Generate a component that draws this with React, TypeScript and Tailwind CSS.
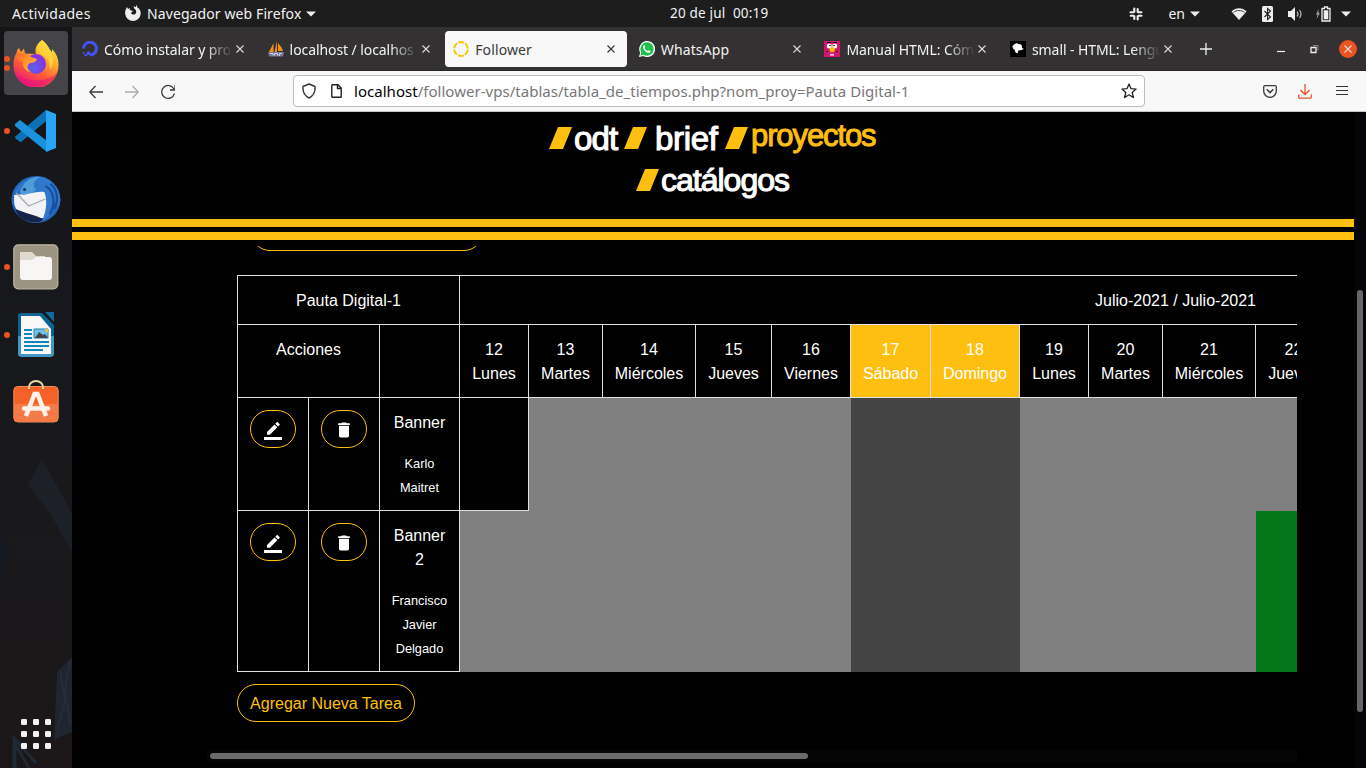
import React from "react";

const ui = "font-['Noto_Sans',sans-serif]";

function Caret() {
  return (
    <svg width="10" height="6" viewBox="0 0 10 6" className="shrink-0">
      <path d="M0 .5h10L5 5.5z" fill="#eee" />
    </svg>
  );
}

function TopBar() {
  return (
    <header className={`flex h-[27px] shrink-0 items-center bg-[#1d1d1d] text-[14px] text-[#f2f2f2] ${ui}`}>
      <span className="ml-3 w-[113px] whitespace-nowrap tracking-[0.36px]">Actividades</span>
      <svg width="16" height="17" viewBox="0 0 16 17" className="shrink-0">
        <path d="M1 4l1-2 1 2 2-1-.3 2L8 6l-2 2c1 2 4 2 5 0 .8-2-.5-3.6-1.8-4.4L8.5 1l2.2 1.2L11.5 0l1 2.4C15 4 16 6.500 15.700 9A7.800 7.800 0 0 1 .2 9C0 7 .3 5.300 1 4z" fill="#eee" />
      </svg>
      <span className="ml-[6px] w-[156px] whitespace-nowrap tracking-[0.1px]">Navegador web Firefox</span>
      <span className="ml-[3px]"><Caret /></span>
      <span className="ml-[354px] w-[100px] whitespace-pre text-[13.5px] tracking-[0.2px]">20 de jul  00:19</span>
      <div className="ml-auto flex items-center">
        <svg width="14" height="14" viewBox="0 0 14 14" className="mr-[25px]" stroke="#eee" strokeWidth="2.100" strokeLinecap="round">
          <path d="M5.300 1.600v3.200M1.500 5.200h3M8.700 2v3M9.500 5.300h2.900M1.700 8.700h2.900M5.300 9.200v2.800M8.700 9.300v3.100M9.500 8.800h3" />
        </svg>
        <span className="mr-[5px]">en</span>
        <Caret />
        <svg width="16" height="12" viewBox="0 0 16 12" className="ml-[31px]">
          <path d="M.5 3.500C5-.8 11-.8 15.500 3.500L8 12z" fill="#eee" />
          <path d="M2.300 4.500C5.500 1.800 10.500 1.800 13.700 4.500" fill="none" stroke="#1d1d1d" strokeWidth=".8" />
        </svg>
        <svg width="12" height="16" viewBox="0 0 12 16" className="ml-[15px]">
          <rect width="11" height="16" rx="1.500" fill="#eee" />
          <path d="M2.500 5l6 6L5.600 13.500v-11L8.500 5l-6 6" fill="none" stroke="#1d1d1d" strokeWidth="1.100" />
        </svg>
        <svg width="16" height="14" viewBox="0 0 16 14" className="ml-[14px]">
          <path d="M0 4h3l4-4v14l-4-4H0z" fill="#eee" />
          <path d="M9 4.500q2 2.500 0 5M11.500 3q3 4 0 8" fill="none" stroke="#bbb" strokeWidth="1.200" />
        </svg>
        <svg width="16" height="16" viewBox="0 0 16 16" className="ml-[11px]">
          <path d="M3.500 3L1 8.500h1.500L1.500 13 5 7H3.500z" fill="#999" />
          <path d="M7 2.500h2.500V1h3v1.500H15V15H7z" fill="none" stroke="#eee" strokeWidth="1.300" />
          <path d="M8.700 4.300h4.600v9H8.700z" fill="#eee" />
        </svg>
        <span className="mr-[15px] ml-[10px]"><Caret /></span>
      </div>
    </header>
  );
}

function FirefoxIcon() {
  return (
    <svg width="48" height="48" viewBox="0 0 48 48">
      <defs>
        <linearGradient id="fxBody" x1=".85" y1="0" x2=".3" y2="1">
          <stop offset="0" stopColor="#fff04a" />
          <stop offset=".35" stopColor="#ffb02c" />
          <stop offset=".65" stopColor="#ff5b36" />
          <stop offset="1" stopColor="#e8127c" />
        </linearGradient>
        <radialGradient id="fxGlobe" cx=".4" cy=".7" r=".7">
          <stop offset="0" stopColor="#5a62e8" />
          <stop offset="1" stopColor="#8b2be0" />
        </radialGradient>
        <linearGradient id="fxHead" x1="0" y1="0" x2="1" y2="1">
          <stop offset="0" stopColor="#ff6a2c" />
          <stop offset="1" stopColor="#ffc52e" />
        </linearGradient>
      </defs>
      <path d="M30 1c4 3 6 6 8 10l2 2V10c5 5 7 11 6.500 17A22.500 22.500 0 0 1 1.500 26c0-6 1-9 3-12 0-2 1-4 2.500-5l2 4 3-3.500 1 5L24 15c-2-6 2-11 6-14z" fill="url(#fxBody)" />
      <path d="M3 32c7 11 31 13 42 2-6 17-35 19-42-2z" fill="#e5137d" opacity=".55" />
      <circle cx="24" cy="25" r="10" fill="url(#fxGlobe)" />
      <path d="M4 17c3-3 9-3 12-1 3 2 6 3 9 4-1 3-4 4-7 4-3 2-4 6 1 9-7-1-9-7-8-10l-5-2z" fill="url(#fxHead)" />
      <path d="M30 1c4 3 6 6 8 10 4 6 4 15 0 20 0-9-3-13-9-16-5-4-2-11 1-14z" fill="#ffd83a" opacity=".8" />
    </svg>
  );
}

function CodeIcon() {
  return (
    <svg width="44" height="44" viewBox="0 0 44 44">
      <path d="M1 28L32 1v11L7 33l-5-3z" fill="#1476b6" />
      <path d="M32 1L1 28l5 5L32 12z" fill="#0d72b4" />
      <path d="M1 15l5-4 27 21v11L1 17z" fill="#1a92dc" />
      <path d="M32 1l10 4v34l-10 4z" fill="#2aa5f5" />
    </svg>
  );
}

function MailIcon() {
  return (
    <svg width="50" height="48" viewBox="0 0 48 48" preserveAspectRatio="none">
      <circle cx="24" cy="24.500" r="23.500" fill="#2467bd" />
      <path d="M3 23C4 9 17 1 31 2 44 7 50 21 46 32l-6-9c2 10-2 18-11 24 5-8 5-15 0-20L10 12z" fill="#2f78ca" />
      <path d="M11 12c3-7 10-11 18-10-7 2-9 8-5 13-4 3-9 6-13 5-3-2-3-5 0-8z" fill="#4d9ed8" />
      <path d="M3 20c4 0 7-1 9 0 6-1 12-4 20-3 3 7 2 18-1 26-8 2-15-2-20-3-5-4-8-8-8-13z" fill="#f3f3f5" />
      <path d="M5 18l12 13 16-7" fill="none" stroke="#a9aaae" strokeWidth="1.300" />
      <path d="M4 34q10 4 20 7l7 3q-3 4-9 3C14 47 6 42 4 34z" fill="#17224b" />
      <path d="M33 11c9 5 10 18 4 28M38 9c7 6 8 18 3 25" fill="none" stroke="#174d9a" strokeWidth="2" />
      <circle cx="13" cy="14.500" r="1.500" fill="#173260" />
    </svg>
  );
}

function FilesIcon() {
  return (
    <svg width="46" height="46" viewBox="0 0 46 46">
      <rect x=".8" y=".8" width="44" height="44" rx="4.500" fill="#9c9482" stroke="#bdb5a4" strokeWidth="1.200" />
      <path d="M7 9q0-1 1-1h11l4 4h9v8H7z" fill="#dedacd" />
      <path d="M7 16h12l4-3h13q3 0 3 3v17q0 3-3 3H10q-3 0-3-3z" fill="#f7f6f4" />
    </svg>
  );
}

function WriterIcon() {
  return (
    <svg width="38" height="46" viewBox="0 0 38 46">
      <path d="M4 1h21l12 12v28q0 4-4 4H5q-4 0-4-4V4q0-3 3-3z" fill="#0c6294" />
      <path d="M1 24h36v17q0 4-4 4H5q-4 0-4-4z" fill="#4395c5" />
      <path d="M28 0h9v10z" fill="#12699a" />
      <path d="M4 4h19l11 13v25H4z" fill="#f8f8f8" />
      <path d="M7 18h8M7 22h8M7 26h8M7 30h25M7 34h25M7 38h19" stroke="#1684bc" strokeWidth="2" />
      <path d="M17 17h14v9H17z" fill="#73bfe7" stroke="#1684bc" strokeWidth="1" />
      <path d="M18 26l4-6 4 3 2-1 3 4z" fill="#444" />
      <path d="M27 17h4v4z" fill="#f0c12a" />
    </svg>
  );
}

function SoftwareIcon() {
  return (
    <svg width="46" height="43" viewBox="0 0 46 43" className="mb-[3px]">
      <rect x=".8" y="6.500" width="44.400" height="35.500" rx="4" fill="#f4622a" stroke="#f58b5e" />
      <path d="M1 24h44v14q0 4-4 4H5q-4 0-4-4z" fill="#f47a48" />
      <path d="M16 9V7a7 6 0 0 1 14 0v2" fill="none" stroke="#ecd7a5" strokeWidth="2" />
      <path d="M13 36l8.500-22h3L33 36" fill="none" stroke="#fff2e8" strokeWidth="4.500" />
      <path d="M11 28.500h24" stroke="#fff2e8" strokeWidth="4.500" strokeLinecap="round" />
    </svg>
  );
}

function DockItem({ dots = 0, active = false, children }: { dots?: number; active?: boolean; children: React.ReactNode }) {
  return (
    <div className={`grid h-16 w-16 shrink-0 grid-cols-[5px_1fr] items-center rounded-[4px] ${active ? "bg-[#454549]" : ""}`}>
      <div className="flex flex-col gap-[3px]">
        {Array.from({ length: dots }, (_, i) => (
          <i key={i} className="h-[6px] w-[6px] rounded-full bg-[#e95420]" />
        ))}
      </div>
      <div className="flex justify-center pr-[6px] pb-px">{children}</div>
    </div>
  );
}

function Dock() {
  return (
    <aside className="flex w-[72px] shrink-0 flex-col items-center bg-linear-to-b from-[#151517] via-[#18191d] to-[#1b1718] pt-1">
      <div className="flex flex-col gap-[4px]">
        <DockItem dots={2} active><FirefoxIcon /></DockItem>
        <DockItem dots={1}><CodeIcon /></DockItem>
        <DockItem><MailIcon /></DockItem>
        <DockItem dots={1}><FilesIcon /></DockItem>
        <DockItem dots={1}><WriterIcon /></DockItem>
        <DockItem><SoftwareIcon /></DockItem>
      </div>
      <svg width="72" height="333" viewBox="0 0 72 333" className="shrink-0">
        <path d="M28 50l14-26 30 54v40L50 78z" fill="#1d2026" />
        <path d="M55 285l2-48 15-15v75L54 305z" fill="#20262f" />
        <path d="M60 235l5 30-8 30M70 225l-5 30 5 34" stroke="#252d39" strokeWidth="2" fill="none" />
        <path d="M14 333v-30l22 25M15 333v-24l14 24" stroke="#1d2a36" strokeWidth="3" fill="none" />
        <path d="M0 94l10 23-10 34z" fill="#15191f" />
        {[0, 1, 2].map((r) => [0, 1, 2].map((c) => (
          <rect key={`${r}-${c}`} x={21 + c * 12} y={284 + r * 12} width="6" height="6" rx="1.300" fill="#f0f0f0" />
        )))}
      </svg>
    </aside>
  );
}

function Close({ dark = false }: { dark?: boolean }) {
  return (
    <svg width="8" height="8" viewBox="0 0 8 8">
      <path d="M.5.5l7 7m0-7l-7 7" stroke={dark ? "#333" : "#ddd"} strokeWidth="1.100" />
    </svg>
  );
}

const favicons = [
  <svg key="0" width="16" height="16" viewBox="0 0 16 16">
    <path d="M1.600 7.500a6.400 6.400 0 1 1 6.400 6.500" fill="none" stroke="#4552f5" strokeWidth="3" />
    <path d="M5 10.500h3V14H5zM2.500 13H5v2.200H2.500zM1 11h1.600v1.800H1z" fill="#4552f5" />
  </svg>,
  <svg key="1" width="16" height="16" viewBox="0 0 16 16">
    <path d="M5.500 2v9H1zM9 0v11H6.500zM10 2q4 4 5 8h-5z" fill="#f29112" />
    <path d="M0 11h16l-1 4.500H1z" fill="#77789d" />
    <path d="M2 12.500h3v2M6.500 14.500v-2h3v2M11.500 15v-2.500H14" stroke="#d3d3e5" fill="none" />
  </svg>,
  <svg key="2" width="16" height="16" viewBox="0 0 16 16">
    <circle cx="8" cy="8" r="6.900" fill="none" stroke="#fdc30e" strokeWidth="2" strokeDasharray="5.900 1.320" strokeDashoffset="-.7" />
  </svg>,
  <svg key="3" width="16" height="16" viewBox="0 0 16 16">
    <path d="M0 16l1.100-4.300A8 8 0 1 1 4.300 15z" fill="#fff" />
    <circle cx="8" cy="8" r="6.700" fill="#20bf4c" />
    <path d="M1.500 14.500l1-3.500L5 14z" fill="#20bf4c" />
    <path d="M5.300 4l1 2-.7 1.200q1.100 2 3 2.800l1.100-.8 2 .9c-.3 1.800-1.500 2-3 1.600Q5 10.500 4 6.500 3.900 4.300 5.300 4z" fill="#fff" />
  </svg>,
  <svg key="4" width="16" height="16" viewBox="0 0 16 16">
    <path d="M0 0h16v16H0z" fill="#d4146f" />
    <path d="M3 1.500h4M9 1.500h4M2 10.500h2M12 10.500h2" stroke="#180b14" />
    <circle cx="5.300" cy="5" r="2.500" fill="#fff" />
    <circle cx="10.700" cy="5" r="2.500" fill="#fff" />
    <circle cx="6" cy="4.500" r=".8" />
    <circle cx="10" cy="4.500" r=".8" />
    <circle cx="8.200" cy="8.500" r="2.600" fill="#ffc400" />
    <path d="M6 12.800h4v2H6z" fill="#eac4db" />
  </svg>,
  <svg key="5" width="16" height="16" viewBox="0 0 16 16">
    <path d="M0 0h16v16H0z" fill="#000" />
    <path d="M2.500 5q3-4 6-2 4 0 3.500 4l2 1-2.500 1-3 .5-1 3Q4 11 5 9 2 8 2.500 5z" fill="#fff" />
  </svg>,
];

const tabs = [
  "Cómo instalar y pro",
  "localhost / localhos",
  "Follower",
  "WhatsApp",
  "Manual HTML: Cóm",
  "small - HTML: Lengu",
];

function TabStrip() {
  return (
    <div className={`flex h-[44px] items-center border-b border-[#242324] bg-[#333132] pt-px pl-[2px] text-[14px] ${ui}`}>
      <div className="flex gap-[3.600px]">
        {tabs.map((t, i) => {
          const on = i === 2;
          const fade = i !== 2 && i !== 3;
          return (
            <div key={t} className={`flex h-9 w-[182px] items-center rounded-[4px] pl-2 ${on ? "bg-[#f8f8f8] text-[#3a3a3a]" : "text-[#f3f3f3]"}`}>
              {favicons[i]}
              <span className={`ml-[6px] w-[129px] overflow-hidden whitespace-nowrap ${fade ? "mask-r-from-78% mask-r-to-100% tracking-[-0.080px]" : "tracking-[0.12px]"}`}>{t}</span>
              <span className="ml-[3px]"><Close dark={on} /></span>
            </div>
          );
        })}
      </div>
      <svg width="12" height="12" viewBox="0 0 12 12" className="ml-[16.500px]"><path d="M6 0v12M0 6h12" stroke="#eee" strokeWidth="1.300" /></svg>
      <svg width="8" height="8" viewBox="0 0 8 8" className="ml-auto"><path d="M0 6.500h8" stroke="#eee" strokeWidth="1.200" /></svg>
      <svg width="9" height="9" viewBox="0 0 9 9" className="ml-[25px]" fill="none">
        <path d="M1 2.500h5v5H1z" stroke="#eee" strokeWidth="1.300" />
        <path d="M3 .5h5v5" stroke="#888" />
      </svg>
      <span className="mr-[9px] ml-[20px] flex h-[18px] w-[18px] items-center justify-center rounded-full bg-[#e95420]"><Close /></span>
    </div>
  );
}

function Toolbar() {
  return (
    <div className={`flex h-[41px] items-center border-b border-[#c6c6c6] bg-[#f8f8f8] ${ui}`}>
      <svg width="86" height="16" viewBox="0 0 86 16" className="mt-px ml-[17px]" fill="none" strokeWidth="1.300" stroke="#3b3b3b">
        <path d="M14 8H1m5.500-6L.8 8l5.700 6" />
        <path d="M36 8h13m-5.500-6l5.700 6-5.700 6" stroke="#aaa" />
        <path d="M85 5A6.500 6.500 0 1 0 85.500 9.500M86 1v5h-5" />
      </svg>
      <div className="ml-[118px] flex h-8 w-[852px] items-center rounded-[4px] border border-[#bdbdbd] bg-white">
        <svg width="14" height="16" viewBox="0 0 14 16" className="ml-2" fill="none" stroke="#333" strokeWidth="1.400">
          <path d="M7 1l6 2.500C13.500 9 11 13 7 15 3 13 .5 9 1 3.500z" strokeLinejoin="round" />
        </svg>
        <svg width="11" height="14" viewBox="0 0 11 14" className="ml-[15px]" fill="none" stroke="#222" strokeWidth="1.400">
          <path d="M.8 1.300q0-.5.500-.5H7L10.200 4v8.700q0 .5-.5.500H1.300q-.5 0-.5-.5zM6.500 1v3.500H10" />
        </svg>
        <span className="ml-[12px] whitespace-nowrap text-[15px] tracking-[0.03px] text-[#777]">
          <span className="text-black">localhost</span>/follower-vps/tablas/tabla_de_tiempos.php?nom_proy=Pauta Digital-1
        </span>
        <svg width="16" height="16" viewBox="0 0 16 16" className="mr-[7px] ml-auto" fill="none" stroke="#222" strokeWidth="1.300" strokeLinejoin="round">
          <path d="M8 1l2 4.700 5.100.4-3.900 3.400 1.200 5L8 11.800l-4.400 2.700 1.200-5L.9 6.100 6 5.700z" />
        </svg>
      </div>
      <svg width="14" height="13" viewBox="0 0 14 13" className="ml-auto" fill="none" stroke="#3b3b3b" strokeWidth="1.300">
        <path d="M2 .7h10q1.300 0 1.300 1.300v4a6.300 6.300 0 0 1-12.600 0V2Q.7.7 2 .7z" />
        <path d="M3.700 4.300L7 7.600l3.300-3.300" strokeWidth="1.500" />
      </svg>
      <svg width="14" height="15" viewBox="0 0 14 15" className="ml-[21px]" fill="none" stroke="#e95420" strokeWidth="1.300">
        <path d="M7 0v10M2.500 6L7 10.500 11.500 6M.7 10.500V13q0 1.200 1.200 1.200h10.200q1.200 0 1.200-1.200v-2.500" />
      </svg>
      <svg width="12" height="12" viewBox="0 0 12 12" className="mr-[18px] ml-[24px]"><path d="M0 1.500h12M0 5.500h12M0 9.500h12" stroke="#333" strokeWidth="1.200" /></svg>
    </div>
  );
}

function Slash() {
  return <svg width="24" height="22" viewBox="0 0 24 22" className="shrink-0"><path d="M0 22L9 0h14L14 22z" fill="#ffbf10" /></svg>;
}

function SiteHeader() {
  const word = "whitespace-nowrap leading-[34px] font-normal";
  return (
    <nav className="h-[128px] shrink-0 bg-black font-['Liberation_Sans',sans-serif] text-[33px] text-white">
      <div className="flex h-[50px] items-start pt-[9px] pl-[477px]">
        <span className="mt-[6px]"><Slash /></span>
        <span className={`mt-px ml-px w-[50px] ${word} tracking-[-0.900px] [-webkit-text-stroke:1.1px_white]`}>odt</span>
        <span className="mt-[6px]"><Slash /></span>
        <span className={`mt-px ml-[7px] w-[70px] ${word} tracking-[-0.300px] [-webkit-text-stroke:1.1px_white]`}>brief</span>
        <span className="mt-[6px]"><Slash /></span>
        <span className={`-mt-[2px] ml-[2px] text-[31px] ${word} tracking-[-1.100px] text-[#ffbf10] [-webkit-text-stroke:1px_#ffbf10]`}>proyectos</span>
      </div>
      <div className="flex h-[56px] items-start pl-[564px]">
        <span className="mt-[7px]"><Slash /></span>
        <span className={`mt-px ml-[1px] text-[32px] ${word} tracking-[-1px] [-webkit-text-stroke:1.1px_white]`}>catálogos</span>
      </div>
      <div className="mt-[1px] h-2 bg-[#ffbf10]" />
      <div className="mt-[5px] h-2 bg-[#ffbf10]" />
    </nav>
  );
}

const days: [string, string][] = [
  ["12", "Lunes"], ["13", "Martes"], ["14", "Miércoles"], ["15", "Jueves"], ["16", "Viernes"],
  ["17", "Sábado"], ["18", "Domingo"], ["19", "Lunes"], ["20", "Martes"], ["21", "Miércoles"], ["22", "Jueves"],
];
const weekend = (i: number) => i === 5 || i === 6;
const tasks = [
  { name: ["Banner"], people: ["Karlo", "Maitret"] },
  { name: ["Banner", "2"], people: ["Francisco", "Javier", "Delgado"] },
];

function Pencil() {
  return (
    <svg width="18" height="18" viewBox="0 0 24 24" fill="#fff">
      <path d="M17.750 7L14 3.250l-10 10V17h3.750l10-10zm2.960-2.960a1 1 0 0 0 0-1.410L18.370.29a1 1 0 0 0-1.410 0L15 2.250 18.750 6l1.960-1.960z" />
      <path d="M0 20h24v4H0z" />
    </svg>
  );
}

function Trash() {
  return (
    <svg width="20" height="20" viewBox="0 0 24 24" fill="#fff">
      <path d="M6 19c0 1.100.9 2 2 2h8c1.100 0 2-.9 2-2V7H6v12zM19 4h-3.500l-1-1h-5l-1 1H5v2h14V4z" />
    </svg>
  );
}

function Schedule() {
  const cell = "border-r border-b border-[#dee2e6]";
  return (
    <div className="grid w-[1096px] shrink-0 grid-cols-[71px_71px_80px_69px_74px_93px_76px_79px_80px_89px_69px_74px_93px_76px] grid-rows-[49px_73px_113px_161px] border-t border-l border-[#dee2e6] text-center text-[16px] leading-6 text-white">
      <div className={`${cell} col-span-3 pt-[13px]`}>Pauta Digital-1</div>
      <div className={`${cell} col-span-11 pt-[13px]`}>
        <div className="w-[1431px]">Julio-2021 / Julio-2021</div>
      </div>
      <div className={`${cell} col-span-2 pt-[13px]`}>Acciones</div>
      <div className={cell} />
      {days.map(([n, d], i) => (
        <div key={n} className={`${cell} pt-[13px] ${weekend(i) ? "bg-[#ffbf10]" : ""}`}>
          {n}<br />{d}
        </div>
      ))}
      {tasks.map((t, r) => (
        <React.Fragment key={r}>
          <div className={`${cell} pt-3 pl-3`}>
            <button className="flex h-[38px] w-[46px] items-center justify-center rounded-full border border-[#ffc107] pt-[4px]"><Pencil /></button>
          </div>
          <div className={`${cell} pt-3 pl-3`}>
            <button className="flex h-[38px] w-[46px] items-center justify-center rounded-full border border-[#ffc107] pt-[2px]"><Trash /></button>
          </div>
          <div className={`${cell} pt-[13px]`}>
            {t.name.map((n) => <div key={n}>{n}</div>)}
            <div className="mt-4">
              {t.people.map((p) => <div key={p} className="h-6"><small className="text-[12.800px]">{p}</small></div>)}
            </div>
          </div>
          {days.map(([n], i) => {
            if (r === 0 && i === 0) return <div key={n} className={cell} />;
            const tone = weekend(i) ? "bg-[#444]" : r === 1 && i === 10 ? "bg-[#04771b]" : "bg-[#808080]";
            return <div key={n} className={tone} />;
          })}
        </React.Fragment>
      ))}
    </div>
  );
}

function Page() {
  return (
    <div className="flex min-h-0 flex-1 bg-black font-['Liberation_Sans',sans-serif]">
      <div className="flex w-[1282px] flex-col">
        <SiteHeader />
        <main className="flex min-h-0 flex-1 flex-col overflow-hidden pt-[6px] pl-[165px]">
          <div className="ml-[14px] flex h-[5px] shrink-0 items-end overflow-hidden">
            <div className="h-[38px] w-[232px] shrink-0 rounded-full border border-[#ffc107]" />
          </div>
          <div className="mt-6 w-[1060px] shrink-0 overflow-hidden"><Schedule /></div>
          <button className="mt-3 h-[38px] w-[178px] shrink-0 rounded-full border border-[#ffc107] pt-px text-[16px] leading-6 text-[#ffc107]">Agregar Nueva Tarea</button>
          <div className="mt-[28px] -ml-[30px] flex h-3 w-[1090px] shrink-0 items-center bg-[#050506] pl-[3px]">
            <div className="h-[6px] w-[598px] rounded-full bg-[#6a6a6a]" />
          </div>
        </main>
      </div>
      <div className="w-3 bg-[#050507] pt-[178px] pl-[3px]">
        <div className="h-[422px] w-[6px] rounded-full bg-[#666]" />
      </div>
    </div>
  );
}

export default function App() {
  return (
    <div className="flex h-[768px] w-[1366px] flex-col overflow-hidden bg-black">
      <TopBar />
      <div className="flex min-h-0 flex-1">
        <Dock />
        <div className="flex w-[1294px] flex-col">
          <TabStrip />
          <Toolbar />
          <Page />
        </div>
      </div>
    </div>
  );
}
